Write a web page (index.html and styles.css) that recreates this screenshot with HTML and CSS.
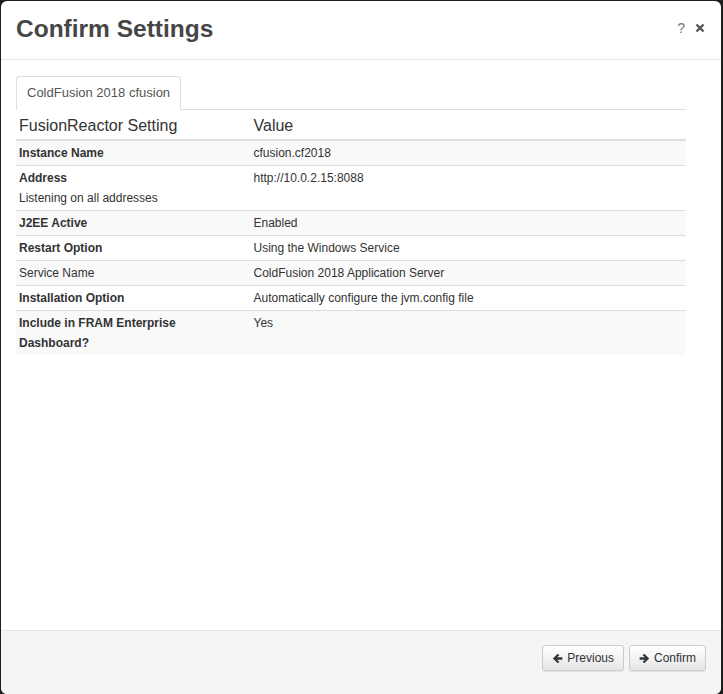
FILE: index.html
```html
<!DOCTYPE html>
<html>
<head>
<meta charset="utf-8">
<link rel="stylesheet" href="styles.css">
</head>
<body>
<div class="modal">
  <div class="modal-header">
    <h2 class="title">Confirm Settings</h2>
    <div class="header-tools">
      <span class="help">?</span>
      <svg class="close" width="10" height="10" viewBox="0 0 10 10"><path d="M1.5 1.5 L8.5 8.5 M8.5 1.5 L1.5 8.5" stroke="#555" stroke-width="2.4" stroke-linecap="butt"/></svg>
    </div>
  </div>
  <div class="modal-body">
    <div class="inner">
      <ul class="tabs">
        <li class="tab active">ColdFusion 2018 cfusion</li>
      </ul>
      <table class="settings">
        <colgroup><col class="c1"><col class="c2"></colgroup>
        <thead>
          <tr><th>FusionReactor Setting</th><th>Value</th></tr>
        </thead>
        <tbody>
          <tr><td class="b">Instance Name</td><td>cfusion.cf2018</td></tr>
          <tr><td><span class="b">Address</span><br>Listening on all addresses</td><td>http://10.0.2.15:8088</td></tr>
          <tr><td class="b">J2EE Active</td><td>Enabled</td></tr>
          <tr><td class="b">Restart Option</td><td>Using the Windows Service</td></tr>
          <tr><td>Service Name</td><td>ColdFusion 2018 Application Server</td></tr>
          <tr><td class="b">Installation Option</td><td>Automatically configure the jvm.config file</td></tr>
          <tr><td class="b">Include in FRAM Enterprise Dashboard?</td><td>Yes</td></tr>
        </tbody>
      </table>
    </div>
  </div>
  <div class="modal-footer">
    <button class="btn"><svg width="11" height="11" viewBox="0 0 12 12"><path d="M6.3 0.8 L0.9 6 L6.3 11.2 L8 9.6 L5.6 7.3 L11.3 7.3 L11.3 4.7 L5.6 4.7 L8 2.4 Z" fill="#333"/></svg>Previous</button>
    <button class="btn"><svg width="11" height="11" viewBox="0 0 12 12"><path d="M5.7 0.8 L11.1 6 L5.7 11.2 L4 9.6 L6.4 7.3 L0.7 7.3 L0.7 4.7 L6.4 4.7 L4 2.4 Z" fill="#333"/></svg>Confirm</button>
  </div>
</div>
</body>
</html>
```

FILE: styles.css
```css
html, body {
  margin: 0;
  padding: 0;
  background: #1e1e1e;
}
body {
  width: 723px;
  height: 694px;
  box-sizing: border-box;
  padding: 1px 2px 0 1px;
  font-family: "Liberation Sans", Arial, sans-serif;
  color: #333;
}
.modal {
  background: #fff;
  height: 693px;
  border-radius: 6px;
  display: flex;
  flex-direction: column;
  overflow: hidden;
}
.modal-header {
  height: 58px;
  border-bottom: 1px solid #e5e5e5;
  display: flex;
  align-items: center;
  justify-content: space-between;
  padding: 0 15px;
  flex: none;
}
.title {
  margin: 0;
  font-size: 24.5px;
  font-weight: bold;
  color: #464646;
  letter-spacing: 0;
  position: relative;
  top: -1px;
}
.header-tools {
  display: flex;
  align-items: center;
  gap: 10px;
  margin-top: -5px;
  margin-right: 1px;
}
.help {
  font-size: 14px;
  color: #777;
}
.close {
  display: block;
}
.modal-body {
  flex: 1;
  padding: 16px 15px 0 15px;
}
.inner {
  margin-right: 20px;
}
.tabs {
  list-style: none;
  margin: 0;
  padding: 0;
  display: flex;
  border-bottom: 1px solid #ddd;
}
.tab {
  font-size: 13px;
  line-height: 18px;
  padding: 7px 10px 7px 10px;
  border: 1px solid #ddd;
  border-bottom-color: transparent;
  border-radius: 4px 4px 0 0;
  margin-bottom: -1px;
  background: #fff;
  color: #555;
}
.settings {
  width: 100%;
  border-collapse: collapse;
  font-size: 12px;
}
.c1 { width: 35%; }
.settings th {
  text-align: left;
  font-weight: normal;
  font-size: 16px;
  line-height: 20px;
  padding: 6px 3px 3px 3px;
  border-bottom: 2px solid #ddd;
  color: #333;
}
.settings td {
  vertical-align: top;
  line-height: 20px;
  padding: 2px 3px;
  border-top: 1px solid #ddd;
}
.settings tbody tr:first-child td {
  border-top: none;
}
.settings tbody tr:nth-child(odd) td {
  background: #f9f9f9;
}
.b { font-weight: bold; }
.modal-footer {
  flex: none;
  height: 64px;
  border-top: 1px solid #e5e5e5;
  background: #f5f5f5;
  display: flex;
  justify-content: flex-end;
  align-items: flex-start;
  gap: 5px;
  padding: 14px 15px 0 0;
  box-sizing: border-box;
}
.btn {
  font-family: "Liberation Sans", Arial, sans-serif;
  font-size: 12px;
  color: #333;
  height: 26px;
  padding: 0 9px;
  border: 1px solid #ccc;
  border-radius: 3px;
  background: linear-gradient(#fff, #e6e6e6);
  box-shadow: inset 0 1px 0 rgba(255,255,255,.15), 0 1px 1px rgba(0,0,0,.075);
  display: flex;
  align-items: center;
  gap: 4px;
}
```
